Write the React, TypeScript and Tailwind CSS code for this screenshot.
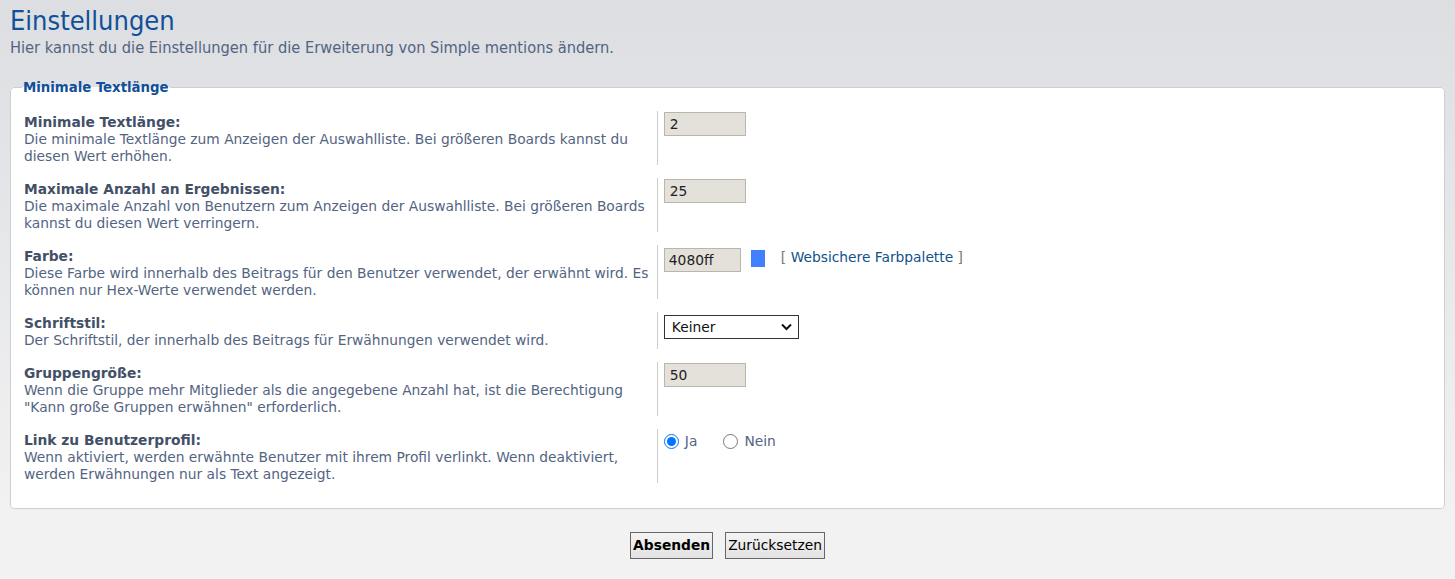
import React from "react";

type Row = {
  title: string;
  desc: string;
  control: React.ReactNode;
};

const condensed = { fontFamily: '"DejaVu Sans Condensed", "DejaVu Sans", sans-serif', fontStretch: "condensed" } as const;

const inputCls =
  "h-[24px] border border-[#b9b6ae] bg-[#e4e0da] px-[5px] text-[13.8px] text-[#222] outline-none";

function TextInput({ value }: { value: string }) {
  return <input type="text" defaultValue={value} className={`${inputCls} w-[82px]`} />;
}

function ColorControl() {
  return (
    <div className="flex items-start">
      <input type="text" defaultValue="4080ff" className={`${inputCls} mt-[2px] w-[77px] pl-[4px]`} />
      <span className="ml-[10px] mt-[4px] inline-block h-[17px] w-[14px] bg-[#4080ff]" />
      <span className="ml-[16px] mt-[3px] text-[13.8px] leading-[17px] text-[#777]">
        [ <a href="#" className="text-[#105289]">Websichere Farbpalette</a> ]
      </span>
    </div>
  );
}

function StyleSelect() {
  return (
    <div className="relative mt-[2px] inline-block">
      <select
        defaultValue="none"
        className="h-[24px] w-[135px] appearance-none border border-[#333] bg-white pl-[7px] text-[13.8px] text-[#111] outline-none"
      >
        <option value="none">Keiner</option>
        <option value="bold">Fett</option>
        <option value="italic">Kursiv</option>
      </select>
      <svg
        className="pointer-events-none absolute right-[7px] top-[8px]"
        width="11"
        height="8"
        viewBox="0 0 11 8"
      >
        <path d="M1 1.5 L5.5 6 L10 1.5" fill="none" stroke="#111" strokeWidth="2" />
      </svg>
    </div>
  );
}

function RadioPair() {
  return (
    <div className="flex items-center pt-px text-[13.8px] text-[#536482]">
      <label className="flex items-center">
        <input type="radio" name="link_profile" defaultChecked className="m-0 h-[15px] w-[15px] accent-[#0075ff]" />
        <span className="ml-[6px]">Ja</span>
      </label>
      <label className="ml-[26px] flex items-center">
        <input type="radio" name="link_profile" className="m-0 h-[15px] w-[15px]" />
        <span className="ml-[6px]">Nein</span>
      </label>
    </div>
  );
}

const rows: Row[] = [
  {
    title: "Minimale Textlänge:",
    desc: "Die minimale Textlänge zum Anzeigen der Auswahlliste. Bei größeren Boards kannst du diesen Wert erhöhen.",
    control: <TextInput value="2" />,
  },
  {
    title: "Maximale Anzahl an Ergebnissen:",
    desc: "Die maximale Anzahl von Benutzern zum Anzeigen der Auswahlliste. Bei größeren Boards kannst du diesen Wert verringern.",
    control: <TextInput value="25" />,
  },
  {
    title: "Farbe:",
    desc: "Diese Farbe wird innerhalb des Beitrags für den Benutzer verwendet, der erwähnt wird. Es können nur Hex-Werte verwendet werden.",
    control: <ColorControl />,
  },
  {
    title: "Schriftstil:",
    desc: "Der Schriftstil, der innerhalb des Beitrags für Erwähnungen verwendet wird.",
    control: <StyleSelect />,
  },
  {
    title: "Gruppengröße:",
    desc: 'Wenn die Gruppe mehr Mitglieder als die angegebene Anzahl hat, ist die Berechtigung "Kann große Gruppen erwähnen" erforderlich.',
    control: <TextInput value="50" />,
  },
  {
    title: "Link zu Benutzerprofil:",
    desc: "Wenn aktiviert, werden erwähnte Benutzer mit ihrem Profil verlinkt. Wenn deaktiviert, werden Erwähnungen nur als Text angezeigt.",
    control: <RadioPair />,
  },
];

export default function App() {
  return (
    <div
      className="min-h-[579px] bg-linear-to-b from-[#dcdee2] to-[#f2f2f2] to-90% px-[10px] pt-[4px]"
      style={{ fontFamily: '"DejaVu Sans", Verdana, sans-serif' }}
    >
      <h1 className="text-[27px] leading-[34px] text-[#115098]" style={condensed}>
        Einstellungen
      </h1>
      <p className="text-[16.3px] leading-[19px] text-[#536482]" style={condensed}>
        Hier kannst du die Einstellungen für die Erweiterung von Simple mentions ändern.
      </p>

      <fieldset className="mt-[22px] rounded-[4px] border border-[#cfcfcf] bg-white pb-[25px] pt-[16px]">
        <legend className="ml-[11px] px-px text-[14.8px] font-bold leading-[16px] text-[#115098]" style={condensed}>
          Minimale Textlänge
        </legend>
        <div className="flex flex-col gap-[13px]">
          {rows.map((r) => (
            <div key={r.title} className="flex">
              <div className="w-[calc(45%+1px)] pl-[13px] pr-[6px] pt-[3px] text-[13.8px] leading-[17px]">
                <div className="font-bold text-[#425067]">{r.title}</div>
                <div className="text-[#536482]">{r.desc}</div>
              </div>
              <div className="flex-1 border-l border-[#cccccc] pl-[6px] pt-px">{r.control}</div>
            </div>
          ))}
        </div>
      </fieldset>

      <div className="mt-[23px] flex justify-center gap-[12px]">
        <button className="h-[27px] border border-[#666] bg-linear-to-b from-[#f4f4f4] to-[#e2e2e2] px-[2px] text-[13.8px] font-bold text-black">
          Absenden
        </button>
        <button className="h-[27px] border border-[#666] bg-linear-to-b from-[#f4f4f4] to-[#e2e2e2] px-[2px] text-[13.8px] text-black">
          Zurücksetzen
        </button>
      </div>
    </div>
  );
}
